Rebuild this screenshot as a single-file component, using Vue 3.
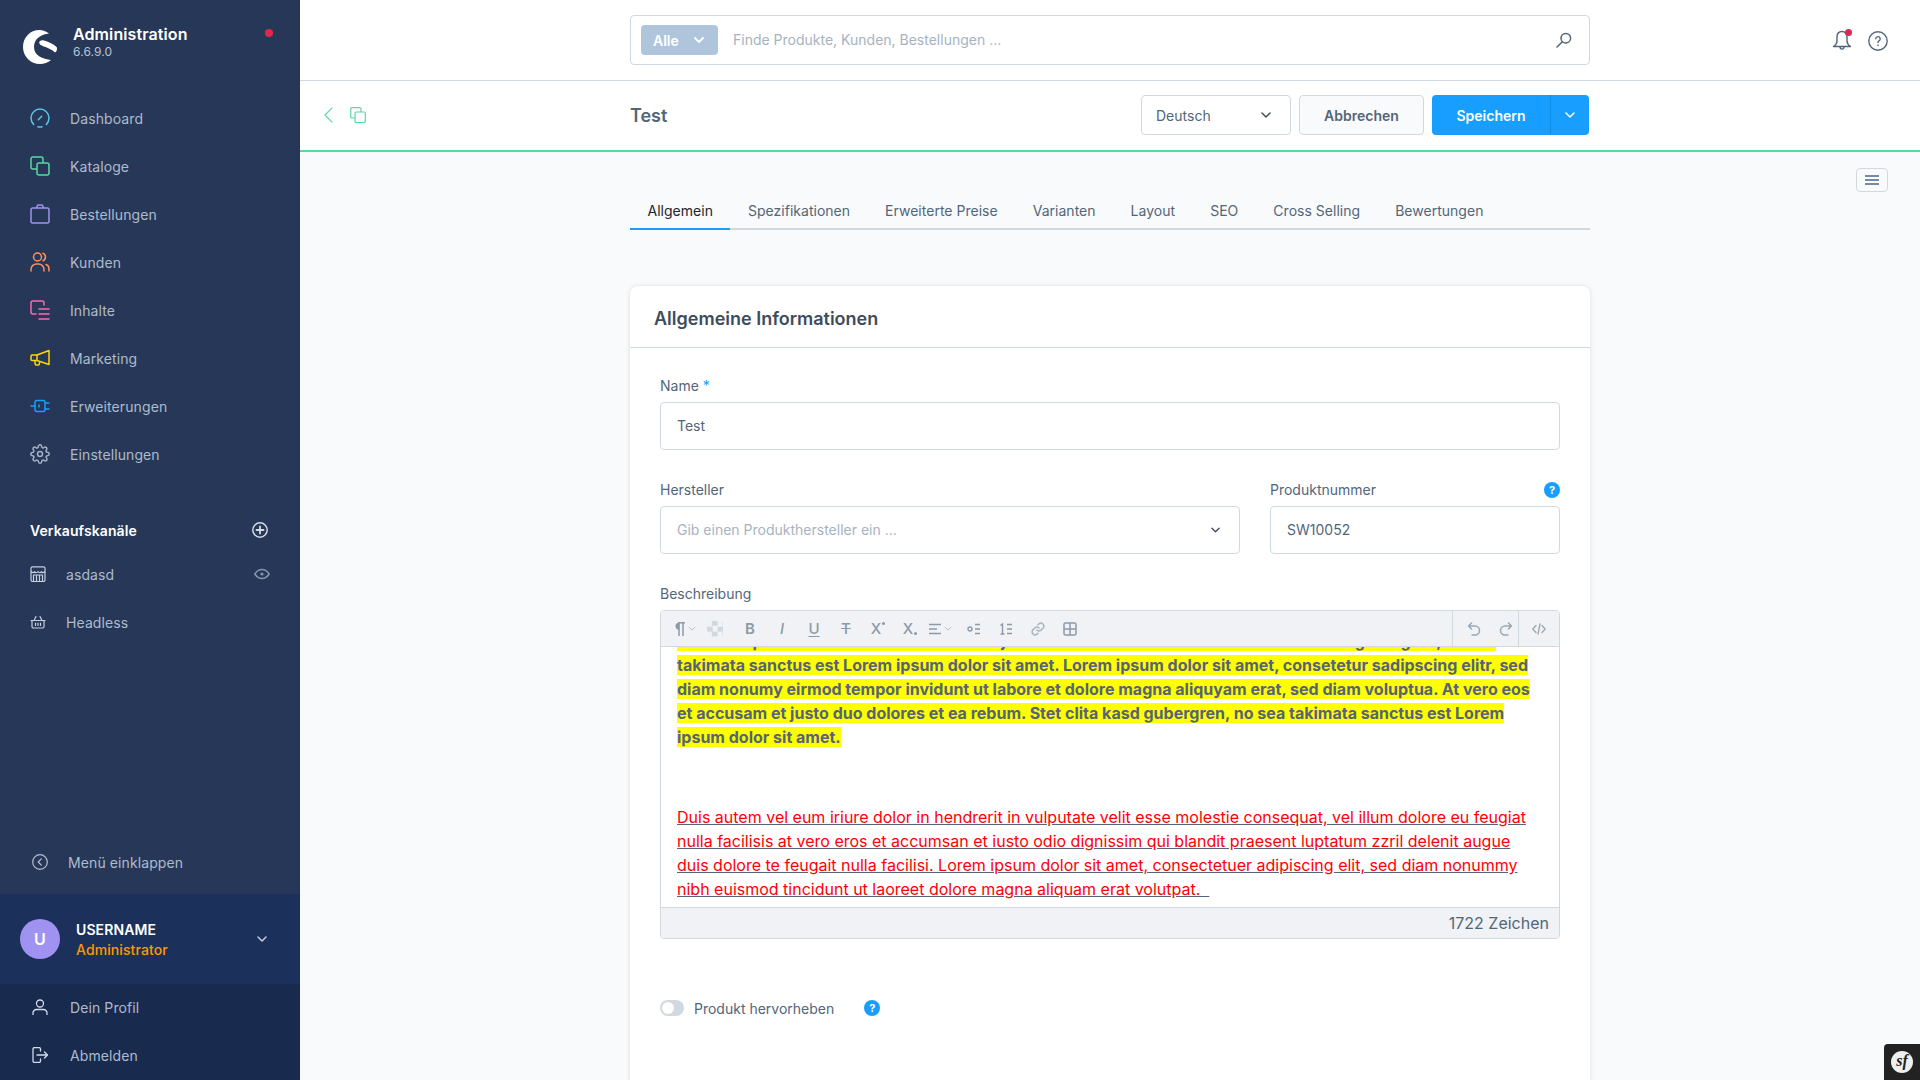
<script setup>
const navItems = [
  { label: 'Dashboard', color: '#57c7e8', d: 'M3.6 16.4A9 9 0 1 1 16.4 16.4M8 18.8a9 9 0 0 0 4 0M8.3 11.7l3.4-3.4' },
  { label: 'Kataloge', color: '#57d9a3', d: 'M7 13H3a2 2 0 0 1-2-2V3a2 2 0 0 1 2-2h8a2 2 0 0 1 2 2v4M9 7h8a2 2 0 0 1 2 2v8a2 2 0 0 1-2 2H9a2 2 0 0 1-2-2V9a2 2 0 0 1 2-2z' },
  { label: 'Bestellungen', color: '#a092f0', d: 'M2.5 4h15A1.5 1.5 0 0 1 19 5.500v12a1.500 1.500 0 0 1-1.500 1.500h-15A1.500 1.500 0 0 1 1 17.500v-12A1.500 1.500 0 0 1 2.500 4zM7 4V2.500A1.500 1.500 0 0 1 8.500 1h3A1.500 1.500 0 0 1 13 2.500V4' },
  { label: 'Kunden', color: '#ff8f5c', d: 'M11.500 5a4 4 0 1 1-8 0 4 4 0 0 1 8 0zM1 19v-1.500a5.500 5.500 0 0 1 5.500-5.500h2a5.500 5.500 0 0 1 5.500 5.500V19M13 1.300a4 4 0 0 1 0 7.400M16 12.500a4.500 4.500 0 0 1 3 4.500v2' },
  { label: 'Inhalte', color: '#ff68b4', d: 'M14 5V3a2 2 0 0 0-2-2H3a2 2 0 0 0-2 2v9a2 2 0 0 0 2 2h3M9 9h10M9 14h10M9 19h10' },
  { label: 'Marketing', color: '#ffd700', d: 'M7 7 19 2.500v14L7 12.500zM7 7H2a1 1 0 0 0-1 1v3.500a1 1 0 0 0 1 1h5M5 12.500v3a1.500 1.500 0 0 0 1.500 1.500h1.500a1.500 1.500 0 0 0 1.300-2.200' },
  { label: 'Erweiterungen', color: '#189eff', d: 'M1 10h4M7 4.500h6a2 2 0 0 1 2 2v7a2 2 0 0 1-2 2H7a2 2 0 0 1-2-2v-7a2 2 0 0 1 2-2zM15 7h4M15 13h4M9 9v2' },
  { label: 'Einstellungen', color: '#a5b1c2', view: '0 0 24 24', d: 'M15 12a3 3 0 1 1-6 0 3 3 0 0 1 6 0zM19.400 15a1.650 1.650 0 0 0 .33 1.820l.06.06a2 2 0 0 1 0 2.830 2 2 0 0 1-2.830 0l-.06-.06a1.650 1.650 0 0 0-1.820-.33 1.650 1.650 0 0 0-1 1.510V21a2 2 0 0 1-2 2 2 2 0 0 1-2-2v-.09A1.650 1.650 0 0 0 9 19.400a1.650 1.650 0 0 0-1.820.33l-.06.06a2 2 0 0 1-2.830 0 2 2 0 0 1 0-2.830l.06-.06a1.650 1.650 0 0 0 .33-1.820 1.650 1.650 0 0 0-1.510-1H3a2 2 0 0 1-2-2 2 2 0 0 1 2-2h.09A1.650 1.650 0 0 0 4.600 9a1.650 1.650 0 0 0-.33-1.820l-.06-.06a2 2 0 0 1 0-2.830 2 2 0 0 1 2.830 0l.06.06a1.650 1.650 0 0 0 1.820.33H9a1.650 1.650 0 0 0 1-1.510V3a2 2 0 0 1 2-2 2 2 0 0 1 2 2v.09a1.650 1.650 0 0 0 1 1.510 1.650 1.650 0 0 0 1.820-.33l.06-.06a2 2 0 0 1 2.830 0 2 2 0 0 1 0 2.830l-.06.06a1.650 1.650 0 0 0-.33 1.820V9a1.650 1.650 0 0 0 1.510 1H21a2 2 0 0 1 2 2 2 2 0 0 1-2 2h-.09a1.650 1.650 0 0 0-1.510 1z' }
]

const tabs = ['Allgemein', 'Spezifikationen', 'Erweiterte Preise', 'Varianten', 'Layout', 'SEO', 'Cross Selling', 'Bewertungen']

// toolbar buttons with letter glyphs
const textTools = [
  { glyph: 'B', cls: 'bold' },
  { glyph: 'I', cls: 'italic' },
  { glyph: 'U', cls: 'under' },
  { glyph: 'T', cls: 'strike' },
  { glyph: 'X', cls: 'script', sup: true },
  { glyph: 'X', cls: 'script', sub: true }
]
</script>

<template>
  <div class="admin">
    <aside class="sidebar">
      <div class="brand">
        <svg class="logo" viewBox="0 0 34 34" fill="#fff">
          <path d="M26 3.500C23 1.500 20 0 16.500 0 7 0 0 7.500 0 17s7.500 17 17 17c4 0 8-1.500 11-4C20 29 11 26 11 17 11 9 18 4 26 3.500z" />
          <path d="M17 11c-2 2 0 4 4 5.500 5 2 8 3 11 6 2-1 2-3 2-5-4-4-9-6-13-7-2-.5-3 0-4 .5z" />
        </svg>
        <div class="brand-text">
          <div class="brand-name">Administration</div>
          <div class="brand-version">6.6.9.0</div>
        </div>
        <span class="status-dot"></span>
      </div>

      <nav class="nav">
        <div v-for="item in navItems" :key="item.label" class="nav-item">
          <svg class="nav-icon" :viewBox="item.view || '0 0 20 20'" fill="none" :stroke="item.color" :stroke-width="item.view ? 1.8 : 1.500" stroke-linecap="round" stroke-linejoin="round">
            <path :d="item.d" />
          </svg>
          <span>{{ item.label }}</span>
        </div>
      </nav>

      <div class="channels-head">
        <span>Verkaufskanäle</span>
        <svg class="side-small" viewBox="0 0 16 16" fill="none" stroke="#d4dbe6" stroke-width="1.500" stroke-linecap="round">
          <circle cx="8" cy="8" r="7.200" />
          <path d="M8 4.500v7M4.500 8h7" stroke-width="1.800" />
        </svg>
      </div>
      <div class="channel">
        <svg class="side-small" viewBox="0 0 16 16" fill="none" stroke="#c5cfdd" stroke-width="1.200" stroke-linejoin="round">
          <path d="M2.500.8h11A1.500 1.500 0 0 1 15 2.300V14a1.500 1.500 0 0 1-1.500 1.500h-11A1.500 1.500 0 0 1 1 14V2.300A1.500 1.500 0 0 1 2.500.8zM1 5.500c1.500 1.500 3 1.500 3.500 0 .5 1.500 2.500 1.500 3.500 0 1 1.500 3 1.500 3.500 0 .5 1.500 2 1.500 3.500 0M3.500 15.500V9h9v6.500M6.500 9v6.500M9.500 9v6.500" />
        </svg>
        <span class="channel-name">asdasd</span>
        <svg class="eye" viewBox="0 0 16 16" fill="none" stroke="#8496ad" stroke-width="1.500">
          <path d="M.8 8C3 4.800 5.300 3.500 8 3.500s5 1.300 7.200 4.500C13 11.200 10.700 12.500 8 12.500S3 11.200.8 8z" />
          <circle cx="8" cy="8" r="1.600" fill="#8496ad" stroke="none" />
        </svg>
      </div>
      <div class="channel">
        <svg class="side-small" viewBox="0 0 16 16" fill="none" stroke="#c5cfdd" stroke-width="1.200" stroke-linecap="round" stroke-linejoin="round">
          <path d="M1 6.500h14M2 6.500v6a1.500 1.500 0 0 0 1.500 1.500h9a1.500 1.500 0 0 0 1.500-1.500v-6M4 6.500 6 2.500M12 6.500 10 2.500M5.500 9v2.500M8 9v2.500M10.500 9v2.500" />
        </svg>
        <span class="channel-name">Headless</span>
      </div>

      <div class="spacer"></div>

      <div class="collapse-row">
        <svg class="side-small" viewBox="0 0 16 16" fill="none" stroke="#b4c0d0" stroke-width="1.200" stroke-linecap="round" stroke-linejoin="round">
          <circle cx="8" cy="8" r="7.300" />
          <path d="M9.300 4.800 6.200 8l3.100 3.200" />
        </svg>
        <span>Menü einklappen</span>
      </div>

      <div class="user-box">
        <div class="avatar">U</div>
        <div class="user-text">
          <div class="user-name">USERNAME</div>
          <div class="user-role">Administrator</div>
        </div>
        <svg class="user-chevron" viewBox="0 0 10 6" fill="none" stroke="#c5cfdd" stroke-width="1.500" stroke-linecap="round" stroke-linejoin="round">
          <path d="M1 1l4 4 4-4" />
        </svg>
      </div>
      <div class="user-menu">
        <div class="user-menu-item">
          <svg class="side-small" viewBox="0 0 16 16" fill="none" stroke="#d4dbe6" stroke-width="1.300" stroke-linecap="round">
            <circle cx="8" cy="4.500" r="3.500" />
            <path d="M1 15.500V14a3.500 3.500 0 0 1 3.500-3.500h7A3.500 3.500 0 0 1 15 14v1.500" />
          </svg>
          <span>Dein Profil</span>
        </div>
        <div class="user-menu-item">
          <svg class="side-small" viewBox="0 0 16 16" fill="none" stroke="#d4dbe6" stroke-width="1.300" stroke-linecap="round" stroke-linejoin="round">
            <path d="M8.500 4V2a1.500 1.500 0 0 0-1.500-1.500H2.500A1.500 1.500 0 0 0 1 2v12a1.500 1.500 0 0 0 1.500 1.500H7A1.500 1.500 0 0 0 8.500 14v-2M5 8h10.500M12.500 5l3 3-3 3" />
          </svg>
          <span>Abmelden</span>
        </div>
      </div>
    </aside>

    <main class="main">
      <header class="topbar">
        <div class="search">
          <div class="search-type">
            <span>Alle</span>
            <svg class="small-chevron" viewBox="0 0 10 6" fill="none" stroke="#fff" stroke-width="1.800" stroke-linecap="round" stroke-linejoin="round">
              <path d="M1 1l4 4 4-4" />
            </svg>
          </div>
          <span class="search-placeholder">Finde Produkte, Kunden, Bestellungen ...</span>
          <svg class="search-icon" viewBox="0 0 16 16" fill="none" stroke="#52667a" stroke-width="1.500" stroke-linecap="round">
            <circle cx="9.800" cy="6.200" r="4.800" />
            <path d="M6.300 9.700 1 15" />
          </svg>
        </div>
        <div class="top-actions">
          <div class="bell">
            <svg viewBox="0 0 20 22" fill="none" stroke="#52667a" stroke-width="1.400" stroke-linejoin="round">
              <path d="M10 1.500c-3.500 0-5 2.800-5 5.500v4c0 2-1.300 4-3.500 5.500h17C16.300 15 15 13 15 11V7c0-2.700-1.500-5.500-5-5.500zM8 16.500c0 3.500 4 3.500 4 0" />
            </svg>
            <span class="bell-dot"></span>
          </div>
          <svg class="help-top" viewBox="0 0 20 20" fill="none" stroke="#52667a" stroke-width="1.400">
            <circle cx="10" cy="10" r="9.200" />
            <path d="M7.800 7.800A2.200 2.200 0 1 1 11 9.800c-.7.4-1 .9-1 1.700M10 14v.6" stroke-linecap="round" />
          </svg>
        </div>
      </header>

      <div class="smartbar">
        <div class="smart-left">
          <svg class="back" viewBox="0 0 10 18" fill="none" stroke="#57d9a3" stroke-width="1.300" stroke-linecap="round" stroke-linejoin="round">
            <path d="M9 1 1 9l8 8" />
          </svg>
          <svg class="copy" viewBox="0 0 16 16" fill="none" stroke="#57d9a3" stroke-width="1.200" stroke-linejoin="round">
            <path d="M5 11H2a1.300 1.300 0 0 1-1.300-1.300V2A1.300 1.300 0 0 1 2 .7h7.700A1.300 1.300 0 0 1 11 2v3M6.300 5h8A1.300 1.300 0 0 1 15.300 6.300v8a1.300 1.300 0 0 1-1.300 1.300H6.300A1.300 1.300 0 0 1 5 14.300V6.300A1.300 1.300 0 0 1 6.300 5z" />
          </svg>
        </div>
        <div class="smart-center">
          <h1 class="page-title">Test</h1>
          <div class="smart-actions">
            <div class="lang-select">
              <span>Deutsch</span>
              <svg class="small-chevron dark" viewBox="0 0 10 6" fill="none" stroke="#3d4c5c" stroke-width="1.500" stroke-linecap="round" stroke-linejoin="round">
                <path d="M1 1l4 4 4-4" />
              </svg>
            </div>
            <button class="btn-cancel">Abbrechen</button>
            <div class="btn-save">
              <span class="save-label">Speichern</span>
              <span class="save-arrow">
                <svg class="small-chevron" viewBox="0 0 10 6" fill="none" stroke="#fff" stroke-width="1.500" stroke-linecap="round" stroke-linejoin="round">
                  <path d="M1 1l4 4 4-4" />
                </svg>
              </span>
            </div>
          </div>
        </div>
      </div>

      <div class="content">
        <button class="sidebar-toggle">
          <span></span><span></span><span></span>
        </button>

        <div class="page">
          <div class="tabs">
            <div v-for="(tab, i) in tabs" :key="tab" class="tab" :class="{ active: i === 0 }">{{ tab }}</div>
          </div>

          <section class="card">
            <h2 class="card-title">Allgemeine Informationen</h2>
            <div class="card-body">
              <label class="label">Name <em>*</em></label>
              <div class="input">Test</div>

              <div class="two-col">
                <div>
                  <label class="label">Hersteller</label>
                  <div class="input placeholder">
                    <span>Gib einen Produkthersteller ein ...</span>
                    <svg class="small-chevron dark" viewBox="0 0 10 6" fill="none" stroke="#3d4c5c" stroke-width="1.500" stroke-linecap="round" stroke-linejoin="round">
                      <path d="M1 1l4 4 4-4" />
                    </svg>
                  </div>
                </div>
                <div>
                  <label class="label split">
                    <span>Produktnummer</span>
                    <span class="help-dot">?</span>
                  </label>
                  <div class="input">SW10052</div>
                </div>
              </div>

              <label class="label desc-label">Beschreibung</label>
              <div class="editor">
                <div class="toolbar">
                  <div class="tool para">
                    <svg class="para-icon" viewBox="0 0 12 14" fill="#8c9aa9" stroke="#8c9aa9" stroke-width="1.500">
                      <path d="M5.500 1.500v5.500A2.800 2.800 0 0 1 5.500 1.500z" />
                      <path d="M5 .8h7M6 1v13M10 1v13" fill="none" />
                    </svg>
                    <svg class="tiny-chevron" viewBox="0 0 10 6" fill="none" stroke="#a9b5c2" stroke-width="1"><path d="M1 1l4 4 4-4" /></svg>
                  </div>
                  <div class="tool color-tool"><span class="checker"></span></div>
                  <div v-for="(t, i) in textTools" :key="i" class="tool" :class="{ first: i === 0 }">
                    <span class="glyph" :class="t.cls">{{ t.glyph }}<i v-if="t.sup" class="sup-dot"></i><i v-if="t.sub" class="sub-dot"></i></span>
                  </div>
                  <div class="tool align-tool">
                    <svg class="tool-icon" viewBox="0 0 14 12" fill="none" stroke="#8c9aa9" stroke-width="1.400"><path d="M1 1.500h12M1 6h8M1 10.500h12" /></svg>
                    <svg class="tiny-chevron" viewBox="0 0 10 6" fill="none" stroke="#a9b5c2" stroke-width="1"><path d="M1 1l4 4 4-4" /></svg>
                  </div>
                  <div class="tool">
                    <svg class="tool-icon" viewBox="0 0 14 12" fill="none" stroke="#8c9aa9" stroke-width="1.400"><circle cx="3" cy="6" r="2" /><path d="M8 1.500h5M8 6h5M8 10.500h5" /></svg>
                  </div>
                  <div class="tool">
                    <svg class="tool-icon" viewBox="0 0 14 12" fill="none" stroke="#8c9aa9" stroke-width="1.400"><path d="M1.500 2.500 3.500 1v10M1.500 11h4M8 1.500h5M8 6h5M8 10.500h5" /></svg>
                  </div>
                  <div class="tool">
                    <svg class="tool-icon" viewBox="0 0 14 14" fill="none" stroke="#a9b5c2" stroke-width="1.500" stroke-linecap="round"><path d="M6 8a3 3 0 0 0 4.200 0l2-2A3 3 0 0 0 8 1.800l-1 1M8 6a3 3 0 0 0-4.200 0l-2 2A3 3 0 0 0 6 12.200l1-1" /></svg>
                  </div>
                  <div class="tool">
                    <svg class="tool-icon" viewBox="0 0 14 14" fill="none" stroke="#8c9aa9" stroke-width="1.500" stroke-linejoin="round"><path d="M2.500 1h9A1.500 1.500 0 0 1 13 2.500v9a1.500 1.500 0 0 1-1.500 1.500h-9A1.500 1.500 0 0 1 1 11.500v-9A1.500 1.500 0 0 1 2.500 1zM1 7h12M7 1v12" /></svg>
                  </div>

                  <div class="history">
                    <div class="tool hist">
                      <svg class="tool-icon" viewBox="0 0 14 14" fill="none" stroke="#9aa8b5" stroke-width="1.500" stroke-linecap="round" stroke-linejoin="round"><path d="M4.500 1 1.500 4l3 3M1.500 4H8a4.500 4.500 0 0 1 0 9H5" /></svg>
                    </div>
                    <div class="tool hist">
                      <svg class="tool-icon" viewBox="0 0 14 14" fill="none" stroke="#9aa8b5" stroke-width="1.500" stroke-linecap="round" stroke-linejoin="round"><path d="M9.500 1l3 3-3 3M12.500 4H6a4.500 4.500 0 0 0 0 9h3" /></svg>
                    </div>
                  </div>
                  <div class="code-tool">
                    <svg class="tool-icon" viewBox="0 0 14 12" fill="none" stroke="#9aa8b5" stroke-width="1.300" stroke-linecap="round" stroke-linejoin="round"><path d="M4 2.500.8 6 4 9.500M10 2.500 13.200 6 10 9.500M8 1 6 11" /></svg>
                  </div>
                </div>

                <div class="editor-content">
                  <div class="text-scroll">
                    <p class="marked"><span>diam voluptua. At vero eos et accusam et justo duo dolores et ea rebum. Stet clita kasd gubergren, no sea takimata sanctus est Lorem ipsum dolor sit amet. Lorem ipsum dolor sit amet, consetetur sadipscing elitr, sed diam nonumy eirmod tempor invidunt ut labore et dolore magna aliquyam erat, sed diam voluptua. At vero eos et accusam et justo duo dolores et ea rebum. Stet clita kasd gubergren, no sea takimata sanctus est Lorem ipsum dolor sit amet.</span></p>
                    <p class="red"><u><span>Duis autem vel eum iriure dolor in hendrerit in vulputate velit esse molestie consequat, vel illum dolore eu feugiat nulla facilisis at vero eros et accumsan et iusto odio dignissim qui blandit praesent luptatum zzril delenit augue duis dolore te feugait nulla facilisi. Lorem ipsum dolor sit amet, consectetuer adipiscing elit, sed diam nonummy nibh euismod tincidunt ut laoreet dolore magna aliquam erat volutpat.&nbsp;&nbsp;</span></u></p>
                  </div>
                </div>

                <div class="editor-footer">1722 Zeichen</div>
              </div>

              <div class="switch-row">
                <span class="switch"><span class="knob"></span></span>
                <span class="switch-label">Produkt hervorheben</span>
                <span class="help-dot">?</span>
              </div>
            </div>
          </section>
        </div>

        <div class="symfony"><span class="sf">sf</span></div>
      </div>
    </main>
  </div>
</template>

<style>
html, body { margin: 0; overflow: hidden; }
</style>

<style scoped>
.admin {
  display: flex;
  width: 1920px;
  height: 1080px;
  overflow: hidden;
  font-family: Inter, "Noto Sans", sans-serif;
  font-size: 14px;
  color: #52667a;
  background: #f9fafb;
}

/* SIDEBAR */
.sidebar {
  width: 300px;
  flex: none;
  display: flex;
  flex-direction: column;
  background: #263757;
  color: #aebbcd;
  letter-spacing: 0.1px;
}

.brand {
  display: flex;
  align-items: center;
  height: 94px;
  padding: 0 26px 11px 23px;
  box-sizing: border-box;
}

.logo { width: 34px; height: 34px; flex: none; margin-top: 11px; }
.brand-text { margin-left: 16px; flex: 1; }
.brand-name { color: #fff; font-size: 16px; font-weight: 600; line-height: 20px; margin-top: 1px; }
.brand-version { font-size: 12px; line-height: 16px; margin-top: 0; color: #b9c4d3; }
.status-dot { width: 8px; height: 8px; border-radius: 50%; background: #de294c; margin: 0 1px 18px 0; }

.nav-item {
  display: flex;
  align-items: center;
  height: 48px;
  padding-left: 30px;
}

.nav-icon { width: 20px; height: 20px; margin-right: 20px; flex: none; }

.channels-head {
  display: flex;
  align-items: center;
  justify-content: space-between;
  height: 24px;
  margin-top: 40px;
  padding: 0 32px 0 30px;
  color: #fff;
  font-weight: 600;
  font-size: 14px;
}

.side-small { width: 16px; height: 16px; flex: none; }

.channel {
  display: flex;
  align-items: center;
  height: 48px;
  padding: 0 30px;
}

.channels-head + .channel { margin-top: 8px; }
.channel-name { margin-left: 20px; flex: 1; }
.eye { width: 16px; height: 16px; }

.spacer { flex: 1; }

.collapse-row {
  display: flex;
  align-items: center;
  height: 48px;
  padding-left: 32px;
  gap: 20px;
  margin-bottom: 8px;
}

.user-box {
  display: flex;
  align-items: center;
  height: 90px;
  padding: 0 33px 0 20px;
  background: #1b315b;
}

.avatar {
  width: 40px;
  height: 40px;
  flex: none;
  border-radius: 50%;
  background: #a092f0;
  color: #fff;
  font-size: 16px;
  font-weight: 600;
  display: flex;
  align-items: center;
  justify-content: center;
}

.user-text { flex: 1; margin-left: 16px; line-height: 20px; margin-top: 2px; }
.user-name { color: #fff; font-weight: 600; }
.user-role { color: #ff9800; font-weight: 500; }
.user-chevron { width: 10px; height: 6px; }

.user-menu { background: #182a4e; }

.user-menu-item {
  display: flex;
  align-items: center;
  height: 48px;
  padding-left: 32px;
  padding-bottom: 2px;
  box-sizing: border-box;
  gap: 22px;
}

/* TOP BAR */
.main {
  flex: 1;
  min-width: 0;
  display: flex;
  flex-direction: column;
}

.topbar {
  height: 80px;
  flex: none;
  background: #fff;
  border-bottom: 1px solid #d1d9e0;
  display: flex;
  align-items: center;
  justify-content: center;
  position: relative;
}

.search {
  width: 960px;
  height: 50px;
  box-sizing: border-box;
  border: 1px solid #d1d9e0;
  border-radius: 4px;
  display: flex;
  align-items: center;
  padding: 0 17px 0 10px;
}

.search-type {
  width: 77px;
  height: 30px;
  box-sizing: border-box;
  padding: 0 14px 0 12px;
  border-radius: 4px;
  background: #afc5dc;
  color: #fff;
  font-weight: 600;
  display: flex;
  align-items: center;
  justify-content: space-between;
}

.small-chevron { width: 10px; height: 6px; flex: none; }

.search-placeholder { flex: 1; margin-left: 15px; color: #a7b3c0; padding-bottom: 1px; }
.search-icon { width: 16px; height: 16px; }

.top-actions {
  position: absolute;
  right: 32px;
  top: 30px;
  display: flex;
  align-items: center;
  gap: 16px;
}

.bell { position: relative; width: 20px; height: 22px; }
.bell svg { width: 20px; height: 22px; display: block; }
.bell-dot {
  position: absolute;
  top: -1px;
  right: 0;
  width: 7px;
  height: 7px;
  border-radius: 50%;
  background: #de294c;
}

.help-top { width: 20px; height: 20px; }

/* SMART BAR */
.smartbar {
  height: 71px;
  flex: none;
  box-sizing: border-box;
  padding-bottom: 1px;
  background: #fff;
  border-bottom: 2px solid #57d9a3;
  display: flex;
  align-items: center;
  position: relative;
  justify-content: center;
}

.smart-left {
  position: absolute;
  left: 24px;
  top: 26px;
  display: flex;
  align-items: center;
  gap: 17px;
}

.back { width: 9px; height: 16px; }
.copy { width: 16px; height: 16px; }

.smart-center {
  width: 960px;
  display: flex;
  align-items: center;
  justify-content: space-between;
}

.page-title { margin: 0; font-size: 18px; font-weight: 600; color: #52667a; }

.smart-actions { display: flex; gap: 8px; margin-right: 1px; }

.lang-select {
  width: 150px;
  height: 40px;
  box-sizing: border-box;
  border: 1px solid #d1d9e0;
  border-radius: 4px;
  background: #fff;
  padding: 0 19px 0 14px;
  display: flex;
  align-items: center;
  justify-content: space-between;
}

.btn-cancel {
  width: 125px;
  height: 40px;
  border: 1px solid #d1d9e0;
  border-radius: 4px;
  background: #f9fafb;
  color: #52667a;
  font: 600 14px Inter, sans-serif;
}

.btn-save {
  width: 157px;
  height: 40px;
  border-radius: 4px;
  background: #189eff;
  color: #fff;
  font-weight: 600;
  display: flex;
}

.save-label { width: 118px; display: flex; align-items: center; justify-content: center; }
.save-arrow {
  flex: 1;
  border-left: 1px solid #0d8ce8;
  display: flex;
  align-items: center;
  justify-content: center;
}

/* CONTENT */
.content { flex: 1; position: relative; min-height: 0; overflow: hidden; }

.sidebar-toggle {
  position: absolute;
  top: 16px;
  right: 32px;
  width: 32px;
  height: 24px;
  box-sizing: border-box;
  border: 1px solid #d1d9e0;
  border-radius: 4px;
  background: #f9fafb;
  padding: 0;
  display: flex;
  flex-direction: column;
  align-items: center;
  justify-content: center;
  gap: 2px;
}

.sidebar-toggle span { width: 14px; height: 2px; background: #758ca3; }

.page { width: 960px; margin: 38px auto 0; }

.tabs {
  display: flex;
  height: 40px;
  border-bottom: 2px solid #d1d9e0;
  box-sizing: border-box;
}

.tab {
  padding: 0 17.500px;
  line-height: 42px;
  height: 40px;
  box-sizing: border-box;
  white-space: nowrap;
  letter-spacing: 0.02px;
}

.tab.active { color: #1c2530; border-bottom: 2px solid #189eff; }

.card {
  margin-top: 56px;
  background: #fff;
  border-radius: 8px 8px 0 0;
  box-shadow: 0 0 4px rgba(120, 138, 155, 0.25);
  padding-bottom: 120px;
}

.card-title {
  margin: 0;
  height: 62px;
  box-sizing: border-box;
  border-bottom: 1px solid #d1d9e0;
  padding: 0 24px;
  font-size: 18px;
  font-weight: 600;
  line-height: 66px;
  color: #3d4c5c;
}

.card-body { padding: 30px 30px 0; }

.label {
  display: block;
  line-height: 16px;
  margin-bottom: 8px;
  color: #52667a;
}

.label em { font-style: normal; color: #189eff; }
.label.split { display: flex; justify-content: space-between; align-items: center; }

.input {
  height: 48px;
  box-sizing: border-box;
  border: 1px solid #d1d9e0;
  border-radius: 4px;
  background: #fff;
  padding: 0 19px 1px 16px;
  display: flex;
  align-items: center;
  justify-content: space-between;
  color: #52667a;
}

.input.placeholder { color: #a7b3c0; }
.input .small-chevron { width: 9px; }

.two-col {
  margin-top: 32px;
  display: grid;
  grid-template-columns: 2fr 1fr;
  gap: 30px;
}

.help-dot {
  width: 16px;
  height: 16px;
  border-radius: 50%;
  background: #189eff;
  color: #fff;
  font-size: 11px;
  font-weight: 700;
  display: inline-flex;
  align-items: center;
  justify-content: center;
}

.desc-label { margin-top: 32px; }

/* EDITOR */
.editor {
  height: 329px;
  box-sizing: border-box;
  border: 1px solid #d1d9e0;
  border-radius: 4px;
  display: flex;
  flex-direction: column;
  overflow: hidden;
}

.toolbar {
  height: 36px;
  flex: none;
  box-sizing: border-box;
  background: #f0f2f5;
  border-bottom: 1px solid #d1d9e0;
  display: flex;
  align-items: center;
  padding-left: 10px;
  position: relative;
  z-index: 1;
}

.tool {
  width: 32px;
  height: 100%;
  flex: none;
  display: flex;
  align-items: center;
  justify-content: center;
  color: #8c9aa9;
}

.tool.para { width: 29px; gap: 3px; padding-left: 2px; box-sizing: border-box; justify-content: flex-start; }
.para-icon { width: 12px; height: 14px; flex: none; }
.tool.color-tool { width: 30px; }
.tool.first { margin-left: 4px; }
.tool.align-tool { width: 33px; gap: 2px; margin-left: -1px; padding-left: 3px; box-sizing: border-box; justify-content: flex-start; }

.glyph { font-size: 15px; font-weight: 500; position: relative; line-height: 1; }
.glyph.bold { font-weight: 600; }
.glyph.italic { font-style: italic; }
.glyph.under { text-decoration: underline; text-underline-offset: 2px; }
.glyph.strike { text-decoration: line-through; }
.glyph.script { margin-left: -4px; }

.sup-dot, .sub-dot {
  position: absolute;
  right: -4px;
  width: 3px;
  height: 3px;
  border-radius: 50%;
  background: #8c9aa9;
}
.sup-dot { top: 1px; }
.sub-dot { bottom: 1px; }

.checker {
  width: 16px;
  height: 16px;
  border-radius: 2px;
  background-image: conic-gradient(#d1d9e0 25%, #f0f2f5 0 50%, #d1d9e0 0 75%, #f0f2f5 0);
  background-size: 10.600px 10.600px;
}

.tool-icon { width: 14px; height: 14px; }
.tiny-chevron { width: 8px; height: 5px; flex: none; }

.history {
  margin-left: auto;
  height: 100%;
  width: 66px;
  box-sizing: border-box;
  border-left: 1px solid #d1d9e0;
  padding-left: 5px;
  display: flex;
}

.tool.hist { width: 32px; }

.code-tool {
  width: 40px;
  height: 100%;
  border-left: 1px solid #d1d9e0;
  display: flex;
  align-items: center;
  justify-content: center;
}

.editor-content {
  flex: 1;
  min-height: 0;
  overflow: hidden;
  padding: 0 20px 0 13px;
  margin-left: 3px;
  font-size: 16px;
  line-height: 24px;
}

.text-scroll { margin-top: -18px; }
.text-scroll p { margin: 0; }

.marked { font-weight: 700; color: #54647a; }
.marked span { background: #ffff00; }

.red { margin-top: 56px !important; }
.red u { color: #54657e; }
.red span { color: #ff0000; }

.editor-footer {
  height: 31px;
  flex: none;
  box-sizing: border-box;
  border-top: 1px solid #d1d9e0;
  background: #f0f2f5;
  padding-right: 10px;
  text-align: right;
  font-size: 16px;
  line-height: 30px;
  color: #52667a;
}

.switch-row {
  margin-top: 61px;
  display: flex;
  align-items: center;
  height: 16px;
}

.switch {
  width: 24px;
  height: 16px;
  border-radius: 8px;
  background: #d1d9e0;
  position: relative;
  flex: none;
}

.knob {
  position: absolute;
  top: 2px;
  left: 2px;
  width: 12px;
  height: 12px;
  border-radius: 50%;
  background: #fff;
}

.switch-label { margin-left: 10px; margin-right: 30px; }

.symfony {
  position: absolute;
  right: 0;
  bottom: 0;
  width: 36px;
  height: 36px;
  background: #222;
  border-top-left-radius: 4px;
  display: flex;
  align-items: center;
  justify-content: center;
}

.sf {
  width: 22px;
  height: 22px;
  border-radius: 50%;
  background: #f0f0f0;
  color: #222;
  font: italic 700 16px "Liberation Serif", serif;
  line-height: 20px;
  text-align: center;
}
</style>
